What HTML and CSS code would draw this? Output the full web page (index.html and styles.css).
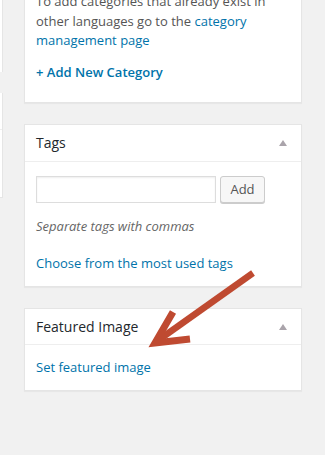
FILE: index.html
```html
<!DOCTYPE html>
<html lang="en">
<head>
    <meta charset="UTF-8">
    <title>Edit Post - Sidebar</title>
    <link rel="stylesheet" href="styles.css">
</head>
<body>
    <div class="screen">
        <div class="edge">
            <div class="edge-panel edge-top"></div>
            <div class="edge-panel edge-mid">
                <div class="edge-line"></div>
            </div>
        </div>

        <div class="sidebar">
            <div class="postbox postbox-cats">
                <div class="inside">
                    <p class="note">To add categories that already exist in other languages go to the <a href="#">category management page</a></p>
                    <a class="add-new" href="#">+ Add New Category</a>
                </div>
            </div>

            <div class="postbox">
                <div class="hndle">
                    <h2>Tags</h2>
                    <span class="toggle"></span>
                </div>
                <div class="inside">
                    <div class="tag-row">
                        <input type="text" class="tag-input">
                        <button class="button">Add</button>
                    </div>
                    <p class="howto">Separate tags with commas</p>
                    <a class="link-most" href="#">Choose from the most used tags</a>
                </div>
            </div>

            <div class="postbox">
                <div class="hndle">
                    <h2>Featured Image</h2>
                    <span class="toggle"></span>
                </div>
                <div class="inside inside-thumb">
                    <a href="#">Set featured image</a>
                </div>
            </div>
        </div>

        <svg class="arrow" width="325" height="455" viewBox="0 0 325 455">
            <line x1="253" y1="273" x2="160" y2="339" stroke="#bf4a31" stroke-width="6.5" stroke-linecap="butt"/>
            <polyline points="173,312 155,343 190,339" fill="none" stroke="#bf4a31" stroke-width="7" stroke-linejoin="miter" stroke-miterlimit="10"/>
        </svg>
    </div>
</body>
</html>
```

FILE: styles.css
```css
body {
    margin: 0;
    background: #f1f1f1;
    font-family: 'Open Sans', 'Liberation Sans', sans-serif;
    font-size: 13px;
    color: #555;
}

a {
    color: #0073aa;
    text-decoration: none;
}

.screen {
    position: relative;
    width: 325px;
    height: 455px;
    overflow: hidden;
    display: flex;
}

.edge {
    width: 3px;
    flex: none;
}

.edge-panel {
    background: #fff;
    border-right: 1px solid #e5e5e5;
    width: 2px;
}

.edge-top {
    height: 72px;
}

.edge-mid {
    margin-top: 21px;
    height: 104px;
    border-bottom: 1px solid #e5e5e5;
}

.edge-line {
    height: 36px;
    border-bottom: 1px solid #eee;
}

.sidebar {
    margin-left: 21px;
    width: 278px;
    margin-top: -21px;
}

.postbox {
    background: #fff;
    border: 1px solid #e5e5e5;
    box-shadow: 0 1px 1px rgba(0, 0, 0, 0.04);
    margin-bottom: 21px;
}

.inside {
    padding: 0 11px 12px;
}

.postbox-cats .inside {
    padding-top: 12px;
    padding-bottom: 20px;
}

.note {
    margin: 0;
    line-height: 19.5px;
}

.add-new {
    display: block;
    margin-top: 12px;
    line-height: 19.5px;
    font-weight: 600;
}

.hndle {
    display: flex;
    align-items: center;
    justify-content: space-between;
    padding: 8px 14px 8px 11px;
    border-bottom: 1px solid #eee;
}

.hndle h2 {
    margin: 0;
    font-size: 14px;
    line-height: 19.6px;
    font-weight: 400;
    color: #23282d;
}

.toggle {
    width: 0;
    height: 0;
    border-left: 4px solid transparent;
    border-right: 4px solid transparent;
    border-bottom: 6px solid #aaa4ab;
    margin-top: 1px;
}

.tag-row {
    display: flex;
    gap: 4px;
    margin-top: 14px;
    height: 27px;
}

.tag-input {
    box-sizing: border-box;
    width: 180px;
    height: 27px;
    margin: 0;
    border: 1px solid #ddd;
    box-shadow: inset 0 1px 2px rgba(0, 0, 0, 0.07);
    background: #fff;
    font-family: inherit;
}

.button {
    box-sizing: border-box;
    width: 45px;
    height: 27px;
    margin: 0;
    padding: 0;
    background: #f7f7f7;
    border: 1px solid #ccc;
    border-radius: 3px;
    box-shadow: 0 1px 0 #ccc;
    color: #555;
    font-family: inherit;
    font-size: 13px;
    line-height: 25px;
}

.howto {
    margin: 14px 0 0;
    font-style: italic;
    color: #666;
    line-height: 19.5px;
}

.link-most {
    display: block;
    margin-top: 18px;
    line-height: 19.5px;
}

.inside-thumb {
    padding-top: 13px;
    line-height: 19.5px;
}

.arrow {
    position: absolute;
    left: 0;
    top: 0;
    pointer-events: none;
}
```
